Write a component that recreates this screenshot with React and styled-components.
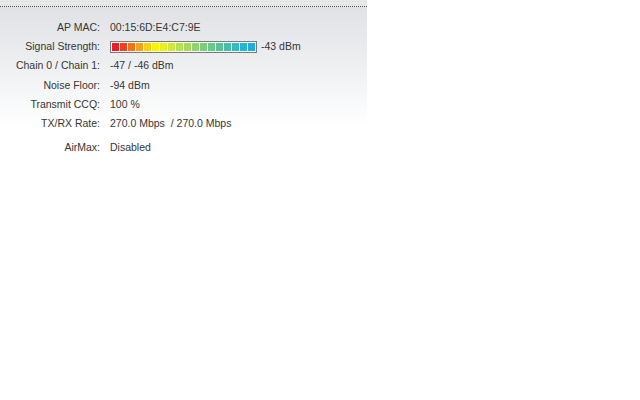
import React from 'react';
import styled, { createGlobalStyle } from 'styled-components';

const GlobalStyle = createGlobalStyle`
  html, body {
    margin: 0;
    padding: 0;
    background: #fff;
  }
  body {
    font-family: 'Liberation Sans', Arial, sans-serif;
  }
`;

const Panel = styled.div`
  width: 367px;
  padding-bottom: 20px;
  background: linear-gradient(to bottom, #dfe0e4 0px, #eceef0 60px, #ffffff 125px);
`;

const TopStrip = styled.div`
  height: 6px;
  background-color: #e9e9ea;
  background-image: radial-gradient(circle, #d6d6d8 0.6px, transparent 0.7px);
  background-size: 3px 3px;
  border-bottom: 1px dotted #505050;
`;

const InfoGrid = styled.div`
  display: grid;
  grid-template-columns: 100px 1fr;
  column-gap: 10px;
  padding-top: 11px;
  font-size: 10.5px;
  color: #363636;
`;

const Label = styled.div`
  text-align: right;
  height: 19.2px;
  line-height: 19.2px;
  white-space: nowrap;
  margin-top: ${props => (props.spaced ? '5px' : '0')};
`;

const Value = styled.div`
  height: 19.2px;
  line-height: 19.2px;
  white-space: pre;
  display: flex;
  align-items: center;
  margin-top: ${props => (props.spaced ? '5px' : '0')};
`;

const SignalBar = styled.div`
  display: flex;
  gap: 1px;
  padding: 1px;
  border: 1px solid #7a7a7a;
  background: #fff;
  margin-right: 4px;
`;

const Segment = styled.span`
  width: 7px;
  height: 8px;
  background: ${props => props.color};
`;

const segmentColors = [
  '#ed1c24', '#f03e1f', '#f4701b', '#f8a21a', '#fbcf15', '#fff200',
  '#e8f01d', '#cde93a', '#b6e24d', '#a2da5d', '#8ed46a', '#7acf79',
  '#68ca88', '#56c59a', '#45bfab', '#34bbbe', '#23b5d1', '#19afe6',
];

const rows = [
  { label: 'AP MAC:', value: '00:15:6D:E4:C7:9E' },
  { label: 'Signal Strength:', value: '-43 dBm', bar: true },
  { label: 'Chain 0 / Chain 1:', value: '-47 / -46 dBm' },
  { label: 'Noise Floor:', value: '-94 dBm' },
  { label: 'Transmit CCQ:', value: '100 %' },
  { label: 'TX/RX Rate:', value: '270.0 Mbps  / 270.0 Mbps' },
  { label: 'AirMax:', value: 'Disabled', spaced: true },
];

export default function App() {
  return (
    <>
      <GlobalStyle />
      <Panel>
        <TopStrip />
        <InfoGrid>
          {rows.map(row => (
            <React.Fragment key={row.label}>
              <Label spaced={row.spaced}>{row.label}</Label>
              <Value spaced={row.spaced}>
                {row.bar && (
                  <SignalBar>
                    {segmentColors.map((c, idx) => (
                      <Segment key={idx} color={c} />
                    ))}
                  </SignalBar>
                )}
                {row.value}
              </Value>
            </React.Fragment>
          ))}
        </InfoGrid>
      </Panel>
    </>
  );
}
